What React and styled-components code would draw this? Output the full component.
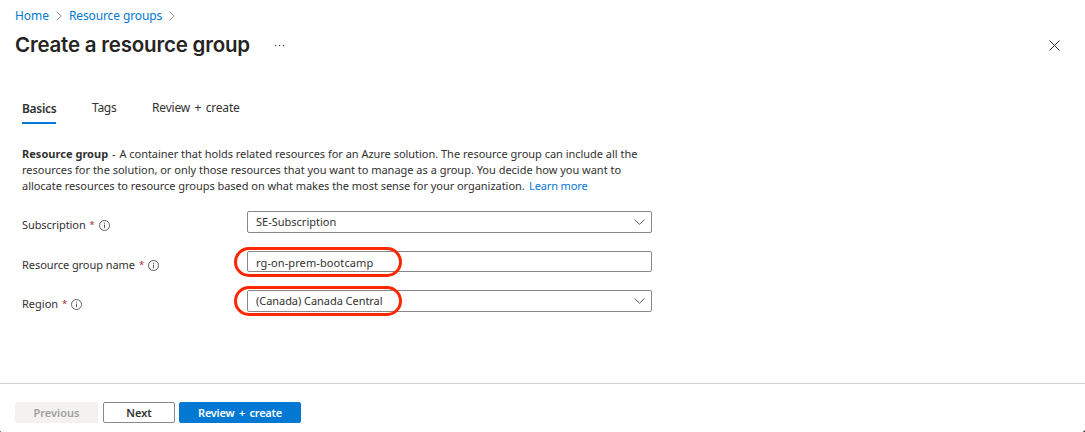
import React from 'react';
import styled, { createGlobalStyle } from 'styled-components';

const Global = createGlobalStyle`
  * { box-sizing: border-box; }
  body { margin: 0; background: #fff; overflow: hidden; }
  button { font: inherit; }
`;

const Page = styled.div`
  display: flex;
  flex-direction: column;
  width: 1085px;
  height: 432px;
  color: #323130;
  font-family: 'Noto Sans', sans-serif;
  font-size: 11px;
  line-height: 16px;
`;

const Header = styled.header`
  padding: 8px 25px 0 15px;
  height: 60px;
`;

const Breadcrumb = styled.nav`
  display: flex;
  align-items: center;
  height: 16px;
  font-size: 12px;
`;

const Crumb = styled.a`
  color: #0078d4;
  letter-spacing: ${(p) => p.$spacing || '0'};
  white-space: nowrap;
`;

const Separator = styled.svg`
  width: 6px;
  height: 10px;
  margin: 0 ${(p) => p.$after || 0} 0 7px;
  fill: none;
  stroke: #8a8886;
  stroke-width: 0.9;
`;

const TitleRow = styled.div`
  display: flex;
  align-items: center;
  height: 24px;
  margin-top: 9px;
`;

const Title = styled.h1`
  margin: 0;
  width: 235px;
  font: 600 20.5px/24px Inter, sans-serif;
  letter-spacing: -0.2px;
  color: #252423;
  white-space: nowrap;
`;

const More = styled.svg`
  width: 11px;
  height: 3px;
  margin-left: 24px;
  fill: #484644;
`;

const Close = styled.svg`
  width: 11px;
  height: 11px;
  margin: 1px 0 0 auto;
  stroke: #323130;
`;

const Tabs = styled.div`
  display: flex;
  align-items: flex-start;
  gap: 36px;
  height: 24px;
  margin: 40px 0 0 22px;
`;

const Tab = styled.div`
  width: ${(p) => p.$width}px;
  height: 24px;
  padding-top: ${(p) => (p.$active ? 1 : 0)}px;
  font-size: 12px;
  font-weight: ${(p) => (p.$active ? 600 : 400)};
  letter-spacing: ${(p) => p.$spacing || '0'};
  word-spacing: 1.5px;
  white-space: nowrap;
  border-bottom: 2px solid ${(p) => (p.$active ? '#0078d4' : 'transparent')};
`;

const Description = styled.p`
  margin: 22px 0 0 22px;
  height: 48px;
`;

const Line = styled.span`
  display: block;
  white-space: nowrap;
  letter-spacing: ${(p) => p.$spacing || '0'};
`;

const Term = styled.b`
  letter-spacing: 0.03px;
`;

const Dash = styled.span`
  margin: 0 1px;
`;

const Link = styled.a`
  margin-left: 1.5px;
  color: #0078d4;
  letter-spacing: -0.12px;
`;

const Form = styled.div`
  display: flex;
  flex-direction: column;
  gap: 18px;
  margin: 17px 0 0 22px;
`;

const Field = styled.div`
  display: flex;
  height: ${(p) => p.$height}px;
`;

const Label = styled.div`
  display: flex;
  align-items: center;
  width: 225px;
  height: 16px;
  margin-top: 6px;
  letter-spacing: ${(p) => p.$spacing || '0'};
  white-space: nowrap;
`;

const Required = styled.span`
  margin: 0 4px 0 4px;
  font-size: 9.5px;
  letter-spacing: 0;
  color: #a4262c;
`;

const Info = styled.svg`
  width: 11px;
  height: 11px;
  margin-top: 1px;
  fill: none;
  stroke: #484644;
`;

const Control = styled.div`
  position: relative;
  display: flex;
  align-items: center;
  justify-content: space-between;
  width: 405px;
  height: 100%;
  padding: 0 6px 0 8px;
  border: 1px solid #8a8886;
  border-radius: 2px;
  letter-spacing: ${(p) => p.$spacing || '0'};
  white-space: nowrap;
`;

const Value = styled.span`
  padding-top: ${(p) => p.$drop || 0}px;
`;

const Chevron = styled.svg`
  width: 11px;
  height: 6px;
  fill: none;
  stroke: #605e5c;
`;

const Highlight = styled.span`
  position: absolute;
  top: -5px;
  left: -14px;
  width: 168px;
  height: 30px;
  border: 3px solid #ff2600;
  border-radius: 15px;
`;

const Footer = styled.footer`
  position: relative;
  display: flex;
  height: 49px;
  margin-top: auto;
  padding: 18px 15px 0;
  border-top: 1px solid #d0cfce;

  &::before,
  &::after {
    content: '';
    position: absolute;
    bottom: 0;
    width: 1px;
    height: 1px;
    background: #777;
  }
  &::before { left: 0; }
  &::after { right: 0; background: #333; box-shadow: -1px 0 #888, 0 -1px #999; }
`;

const Button = styled.button`
  width: ${(p) => p.$width}px;
  height: 21px;
  margin-right: ${(p) => p.$after || 0}px;
  padding: 0;
  border: 1px solid ${(p) => p.$border};
  border-radius: 2px;
  background: ${(p) => p.$fill};
  color: ${(p) => p.$color};
  font-weight: 600;
  line-height: 19px;
  letter-spacing: ${(p) => p.$spacing || '0'};
  word-spacing: 2px;
`;

const Separate = ({ after }) => (
  <Separator $after={after} viewBox="0 0 6 10"><path d="M.7.8 5.1 5 .7 9.2" /></Separator>
);

const InfoIcon = () => (
  <Info viewBox="0 0 11 11">
    <circle cx="5.5" cy="5.5" r="5" strokeWidth=".85" />
    <path d="M5.5 4.6v3.6M5.5 2.7v1" strokeWidth=".9" />
  </Info>
);

const Down = () => (
  <Chevron viewBox="0 0 11 6"><path d="m.5.5 5 4.8 5-4.8" /></Chevron>
);

export default function App() {
  return (
    <>
      <Global />
      <Page>
        <Header>
          <Breadcrumb>
            <Crumb $spacing="-0.05px">Home</Crumb>
            <Separate after="7px" />
            <Crumb $spacing="-0.12px">Resource groups</Crumb>
            <Separate />
          </Breadcrumb>
          <TitleRow>
            <Title>Create a resource group</Title>
            <More viewBox="0 0 11 3">
              <circle cx="1.5" cy="1.5" r=".75" />
              <circle cx="5.5" cy="1.5" r=".75" />
              <circle cx="9.5" cy="1.5" r=".75" />
            </More>
            <Close viewBox="0 0 11 11"><path d="m.5.5 10 10m0-10-10 10" /></Close>
          </TitleRow>
        </Header>
        <Tabs>
          <Tab $active $width={34} $spacing="-0.3px">Basics</Tab>
          <Tab $width={24} $spacing="-0.3px">Tags</Tab>
          <Tab $spacing="-0.18px">Review + create</Tab>
        </Tabs>
        <Description>
          <Line $spacing="-0.024px"><Term>Resource group</Term> <Dash>-</Dash> A container that holds related resources for an Azure solution. The resource group can include all the</Line>
          <Line $spacing="-0.01px">resources for the solution, or only those resources that you want to manage as a group. You decide how you want to</Line>
          <Line $spacing="-0.04px">allocate resources to resource groups based on what makes the most sense for your organization. <Link>Learn more</Link></Line>
        </Description>
        <Form>
          <Field $height={22}>
            <Label $spacing="-0.08px">Subscription<Required>*</Required><InfoIcon /></Label>
            <Control><Value>SE-Subscription</Value><Down /></Control>
          </Field>
          <Field $height={21}>
            <Label $spacing="-0.06px">Resource group name<Required>*</Required><InfoIcon /></Label>
            <Control $spacing="0.1px"><Value $drop={3}>rg-on-prem-bootcamp</Value><Highlight /></Control>
          </Field>
          <Field $height={22}>
            <Label>Region<Required>*</Required><InfoIcon /></Label>
            <Control $spacing="-0.05px"><Value>(Canada) Canada Central</Value><Down /><Highlight /></Control>
          </Field>
        </Form>
        <Footer>
          <Button $width={83} $after={5} $fill="#f3f2f1" $border="#f3f2f1" $color="#a19f9d">Previous</Button>
          <Button $width={72} $after={4} $fill="#fff" $border="#8a8886" $color="#323130">Next</Button>
          <Button $width={122} $fill="#0078d4" $border="#0078d4" $color="#fff" $spacing="-0.25px">Review + create</Button>
        </Footer>
      </Page>
    </>
  );
}
